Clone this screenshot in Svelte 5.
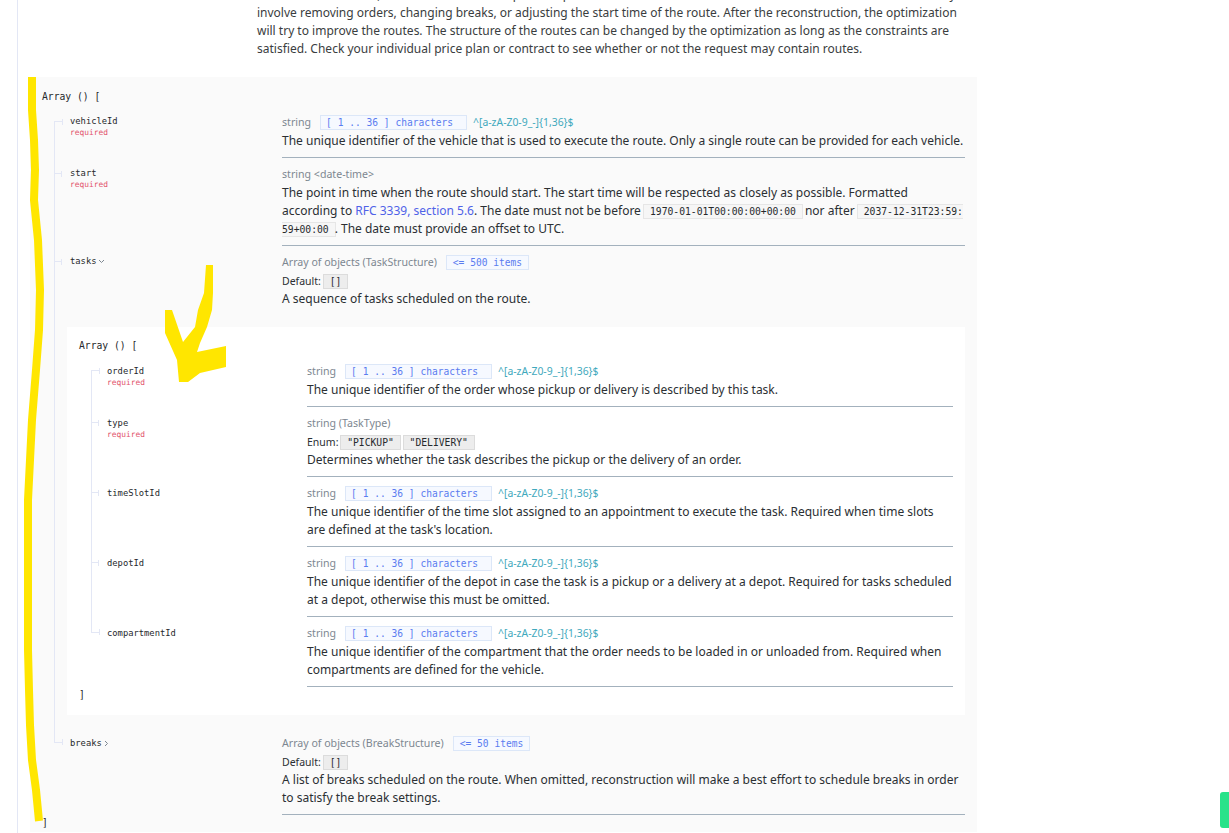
<script>
  const idPattern = '^[a-zA-Z0-9_-]{1,36}$';
</script>

{#snippet name(label, required, position)}
  <div class="name {position ?? ''}">
    <span class="tick"></span>
    <span class="prop">{label}</span>
    {#if required}<span class="req">required</span>{/if}
  </div>
{/snippet}

{#snippet idType()}
  <div class="head"><span class="type">string</span><span class="badge">[ 1 .. 36 ] characters</span><span class="pattern">{idPattern}</span></div>
{/snippet}

<div class="viewport">
  <div class="page">
    <div class="intro">
      <p>If routes are included, then the solver should parse or prune them to reconstruct the routes. This action has effects and may</p>
      <p>involve removing orders, changing breaks, or adjusting the start time of the route. After the reconstruction, the optimization will try to improve the routes. The structure of the routes can be changed by the optimization as long as the constraints are satisfied. Check your individual price plan or contract to see whether or not the request may contain routes.</p>
    </div>

    <section class="outer">
      <div class="bracket">Array () [</div>

      <div class="row">
        {@render name('vehicleId', true, 'first')}
        <div class="detail">
          {@render idType()}
          <div>The unique identifier of the vehicle that is used to execute the route. Only a single route can be provided for each vehicle.</div>
        </div>
      </div>

      <div class="row">
        {@render name('start', true)}
        <div class="detail">
          <div class="head"><span class="type">string &lt;date-time&gt;</span></div>
          <div>The point in time when the route should start. The start time will be respected as closely as possible. Formatted according to <span class="link">RFC 3339, section 5.6</span>. The date must not be before <code>1970-01-01T00:00:00+00:00</code> nor after <code>2037-12-31T23:59:59+00:00</code>. The date must provide an offset to UTC.</div>
        </div>
      </div>

      <div class="row">
        <div class="name">
          <span class="tick"></span>
          <span class="prop">tasks<svg class="chev" width="7" height="5" viewBox="0 0 7 5"><path d="M1 1l2.5 2.5L6 1" fill="none" stroke="#7d8791" stroke-width="1"/></svg></span>
        </div>
        <div class="detail open">
          <div class="head"><span class="type">Array of objects (TaskStructure)</span><span class="badge short">&lt;= 500 items</span></div>
          <div class="small">Default: <code class="val">[]</code></div>
          <div>A sequence of tasks scheduled on the route.</div>
        </div>
      </div>

      <div class="nest-wrap">
        <div class="inner">
          <div class="bracket">Array () [</div>

          <div class="row">
            {@render name('orderId', true, 'first')}
            <div class="detail">
              {@render idType()}
              <div>The unique identifier of the order whose pickup or delivery is described by this task.</div>
            </div>
          </div>

          <div class="row">
            {@render name('type', true)}
            <div class="detail">
              <div class="head"><span class="type">string (TaskType)</span></div>
              <div class="small">Enum: <code class="val">"PICKUP"</code> <code class="val">"DELIVERY"</code></div>
              <div>Determines whether the task describes the pickup or the delivery of an order.</div>
            </div>
          </div>

          <div class="row">
            {@render name('timeSlotId', false)}
            <div class="detail">
              {@render idType()}
              <div>The unique identifier of the time slot assigned to an appointment to execute the task. Required when time slots are defined at the task's location.</div>
            </div>
          </div>

          <div class="row">
            {@render name('depotId', false)}
            <div class="detail">
              {@render idType()}
              <div>The unique identifier of the depot in case the task is a pickup or a delivery at a depot. Required for tasks scheduled at a depot, otherwise this must be omitted.</div>
            </div>
          </div>

          <div class="row">
            {@render name('compartmentId', false, 'last')}
            <div class="detail">
              {@render idType()}
              <div>The unique identifier of the compartment that the order needs to be loaded in or unloaded from. Required when compartments are defined for the vehicle.</div>
            </div>
          </div>

          <div class="bracket close">]</div>
        </div>
      </div>

      <div class="row">
        <div class="name last">
          <span class="tick"></span>
          <span class="prop">breaks<svg class="chev" width="5" height="7" viewBox="0 0 5 7"><path d="M1 1l2.5 2.5L1 6" fill="none" stroke="#7d8791" stroke-width="1"/></svg></span>
        </div>
        <div class="detail">
          <div class="head"><span class="type">Array of objects (BreakStructure)</span><span class="badge short">&lt;= 50 items</span></div>
          <div class="small">Default: <code class="val">[]</code></div>
          <div>A list of breaks scheduled on the route. When omitted, reconstruction will make a best effort to schedule breaks in order to satisfy the break settings.</div>
        </div>
      </div>

      <div class="bracket close">]</div>
    </section>
  </div>

  <svg class="marker" width="1229" height="833" viewBox="0 0 1229 833" aria-hidden="true">
    <polyline points="32,77 32,110 34,140 35,170 34,200 38,240 40,290 39,330 36,370 32,420 28,500 28,600 28,650 29,690 30,725 32,760 36,790 39,821" fill="none" stroke="#ffe600" stroke-width="8"/>
    <polygon points="206,265 213,265 213,293 212,310 207,327 200,343 197,352 226,346 226,367 200,373 188,382 179,382 177,360 165,333 165,310 172,310 183,342 195,327 198,310 204,293" fill="#ffe600"/>
  </svg>
  <div class="feedback"></div>
</div>

<style>
  :global(body) { margin: 0; background: #fff; }
  .viewport {
    position: relative;
    height: 833px;
    overflow: hidden;
    font-family: "Noto Sans", sans-serif;
    font-size: 12px;
    line-height: 18px;
    color: #2b2f33;
  }
  .page {
    display: flow-root;
    margin-left: 17px;
    height: 833px;
    box-sizing: border-box;
    border-left: 1px solid #e3e7f5;
  }
  .intro {
    margin-left: 239px;
    width: 720px;
    margin-top: -14px;
    height: 91px;
    color: #3a3d40;
  }
  .intro p { margin: 0; }
  .outer {
    box-sizing: border-box;
    margin-left: 12px;
    width: 947px;
    background: #fafafa;
    padding: 11px 12px 0;
  }
  .inner {
    box-sizing: border-box;
    background: #fff;
    padding: 10px 12px 11px;
  }
  .bracket {
    font-family: "DejaVu Sans Mono", monospace;
    font-size: 9.7px;
    line-height: 18px;
    color: #26292c;
  }
  .close { margin-top: -1px; }
  .row {
    display: grid;
    grid-template-columns: 228px 1fr;
    margin-left: 12px;
  }
  .inner .row { grid-template-columns: 216px 1fr; }
  .name {
    position: relative;
    border-left: 1px solid #e3e7f5;
    padding: 9px 0 0 15px;
    display: flex;
    flex-direction: column;
    align-items: flex-start;
    font-family: "DejaVu Sans Mono", monospace;
  }
  .inner .name, .name.last { padding-top: 10px; }
  .tick {
    position: absolute;
    left: -1px;
    top: 15px;
    width: 8px;
    height: 0;
    border-top: 1px solid #e3e7f5;
  }
  .tick::after {
    content: "";
    position: absolute;
    right: 0;
    top: -3px;
    width: 1px;
    height: 6px;
    background: #e3e7f5;
  }
  .first { border-left-color: transparent; }
  .first .tick { bottom: 0; height: auto; border-left: 1px solid #e3e7f5; }
  .last { border-left-color: transparent; }
  .last .tick {
    top: 0;
    height: 15px;
    border-top: 0;
    border-left: 1px solid #e3e7f5;
    border-bottom: 1px solid #e3e7f5;
  }
  .last .tick::after { top: auto; bottom: -3px; }
  .prop {
    font-size: 8.8px;
    line-height: 12px;
    color: #26292c;
    display: inline-flex;
    align-items: center;
  }
  .req {
    font-size: 7.9px;
    line-height: 11px;
    color: #e2526a;
  }
  .chev { margin-left: 2px; }
  .detail {
    padding: 8px 0 7px;
    border-bottom: 1px solid #a3b1bd;
    min-width: 0;
  }
  .head { margin: -1px 0 1px; }
  .detail.open { border-bottom: 0; padding-bottom: 19px; }
  .small { font-size: 10.5px; }
  .type { color: #7d8791; font-size: 10.6px; }
  .badge {
    display: inline-block;
    box-sizing: border-box;
    width: 147px;
    height: 15px;
    margin: 0 6px 0 9px;
    padding-left: 5px;
    background: #f6f9ff;
    border: 1px solid #dce7f8;
    font-family: "DejaVu Sans Mono", monospace;
    font-size: 9.6px;
    line-height: 14px;
    color: #5a7cf0;
  }
  .badge.short { width: auto; padding: 0 6px; margin-right: 0; }
  .pattern { color: #3fa9bd; font-size: 10.4px; }
  .link { color: #4f62e8; }
  code {
    font-family: "DejaVu Sans Mono", monospace;
    font-size: 9.7px;
    line-height: 1;
    padding: 1px 6px;
    margin: 0 -1px;
    background: #f6f6f6;
    border: 1px solid #e6e6e6;
    word-break: break-all;
    color: #26292c;
  }
  code.val { background: #ededed; border-color: #dcdcdc; }
  .val + .val { margin-left: 0; }
  .nest-wrap {
    margin-left: 12px;
    border-left: 1px solid #e3e7f5;
    padding: 0 0 12px 12px;
  }
  .marker {
    position: absolute;
    top: 0;
    left: 0;
    pointer-events: none;
  }
  .feedback {
    position: absolute;
    right: 0;
    top: 792px;
    width: 9px;
    height: 36px;
    border-radius: 3px 0 0 3px;
    background: #29e28a;
  }
</style>
